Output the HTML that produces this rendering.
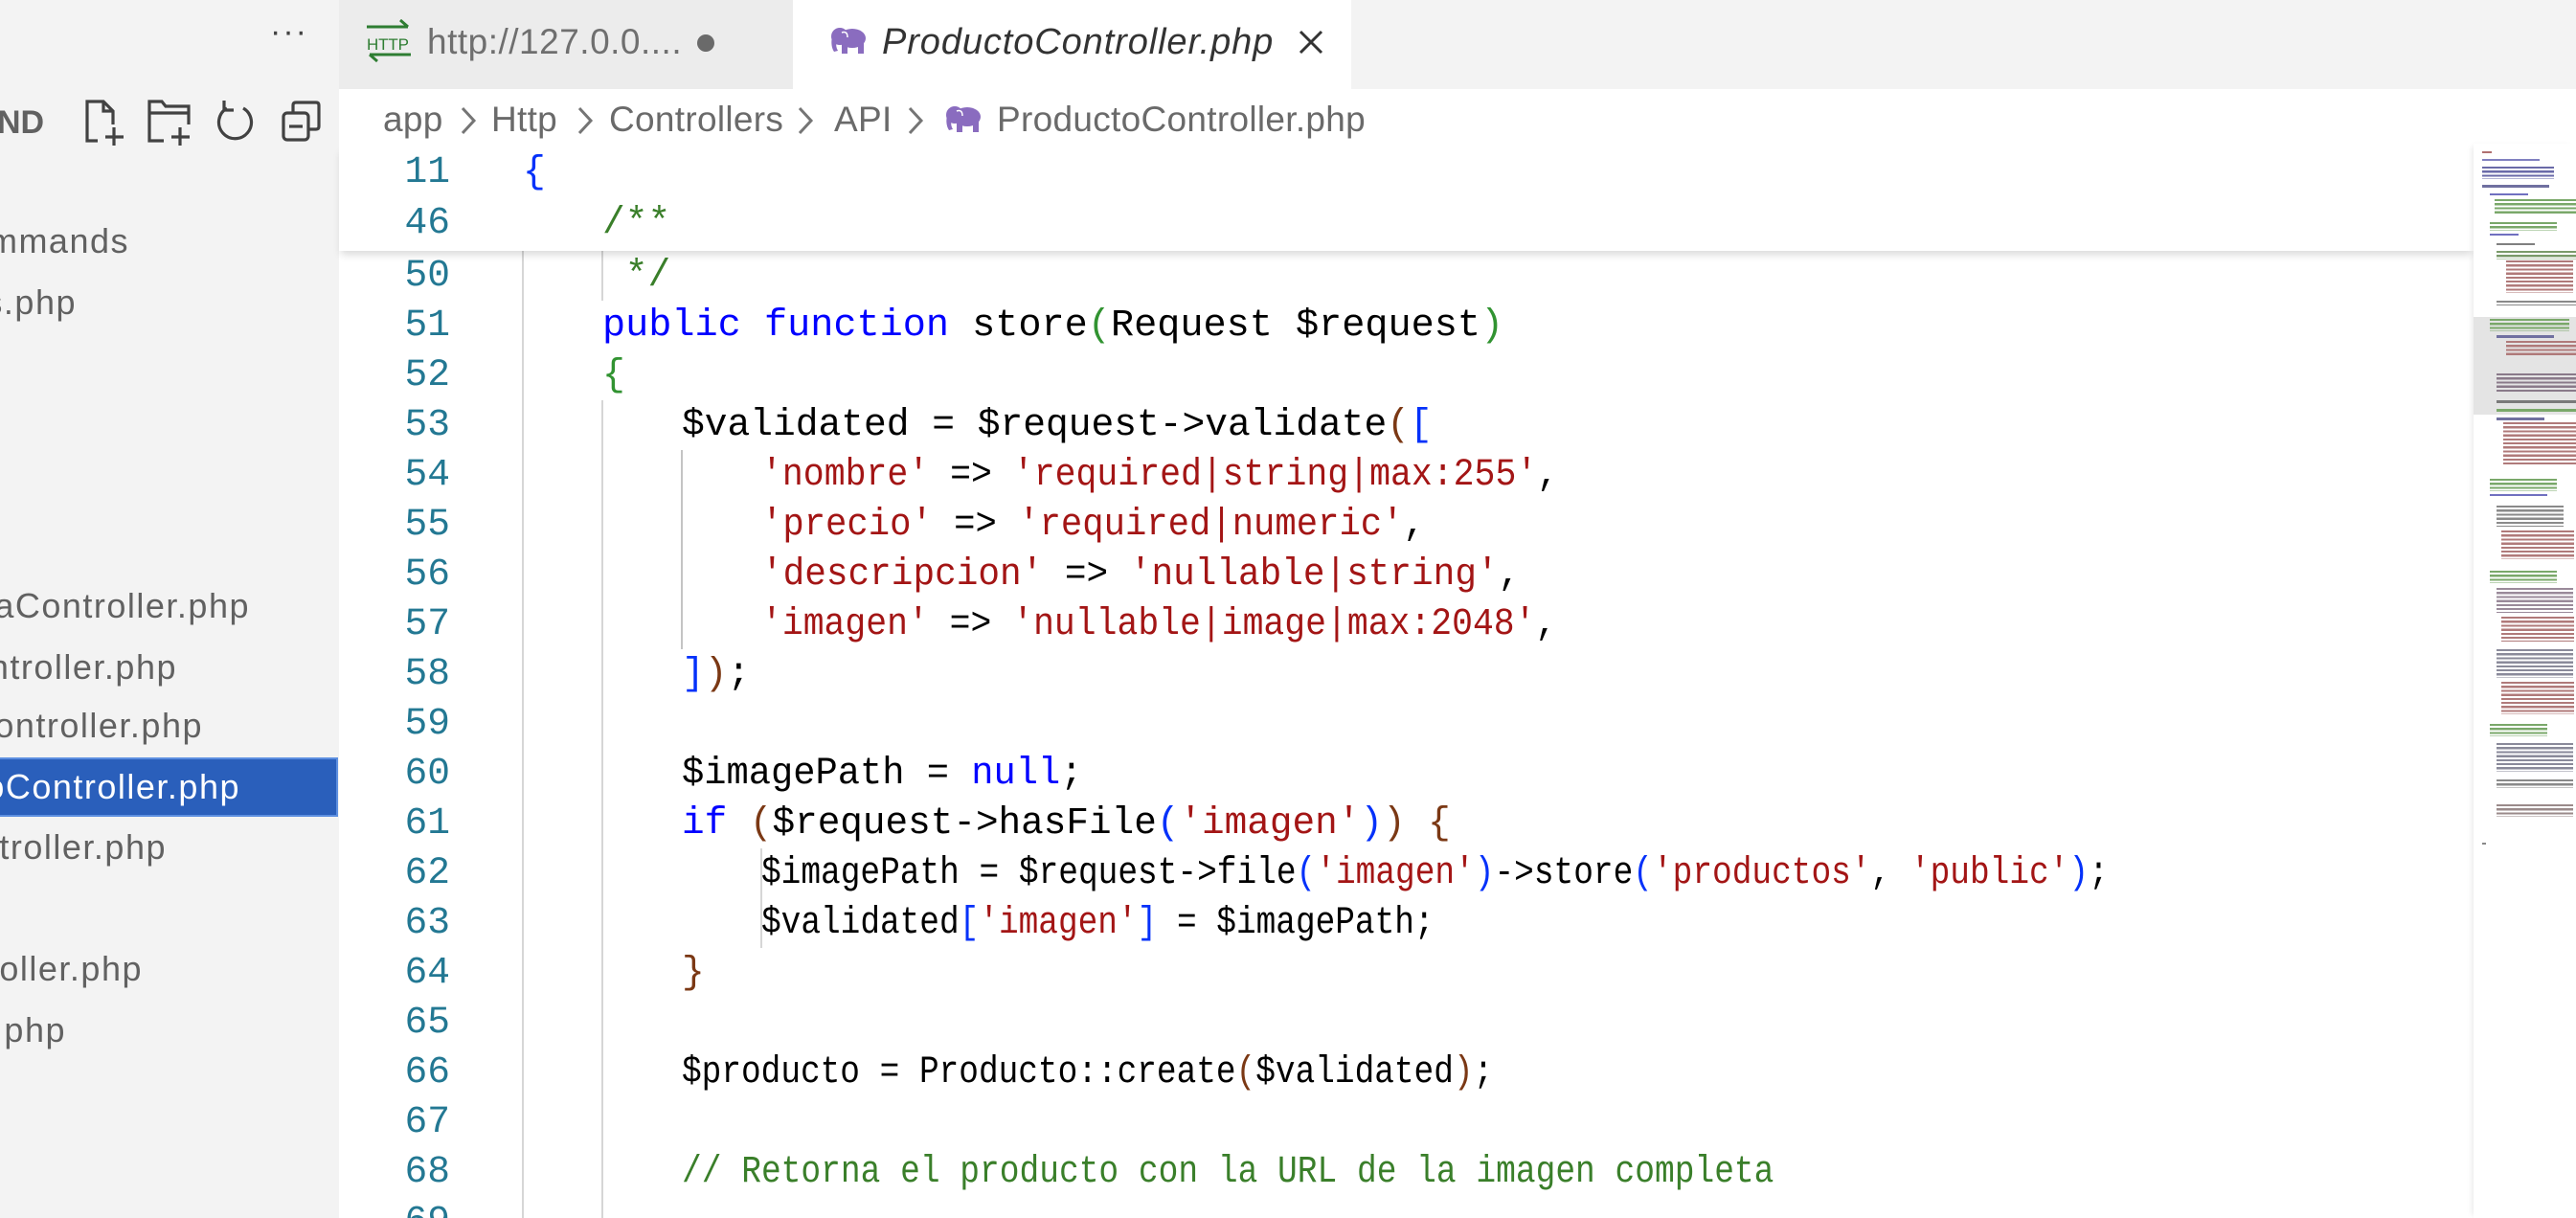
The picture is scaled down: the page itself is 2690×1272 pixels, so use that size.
<!DOCTYPE html>
<html><head><meta charset="utf-8">
<style>
*{margin:0;padding:0;box-sizing:border-box}
html,body{width:2690px;height:1272px;overflow:hidden;background:#fff}
body{position:relative;font-family:"Liberation Sans",sans-serif}
.abs{position:absolute}
#side{left:0;top:0;width:354px;height:1272px;background:#f3f3f3}
.si{position:absolute;left:0;height:63px;line-height:63px;font-size:36px;letter-spacing:1.5px;color:#616161;white-space:nowrap;overflow:hidden;text-align:right;direction:rtl}
.si span{direction:ltr;unicode-bidi:bidi-override}
#tabs{left:354px;top:0;width:2336px;height:93px;background:#f3f3f3}
.code{font-family:"Liberation Mono",monospace;font-size:39.6px;white-space:pre;color:#000}
.ln{position:absolute;left:360px;width:110px;text-align:right;height:52px;line-height:52px;color:#237893;font-family:"Liberation Mono",monospace;font-size:39.6px}
.cl{position:absolute;height:52px;line-height:52px;transform-origin:0 50%}
.k{color:#0000ff}.s{color:#a31515}.c{color:#3a7f2a}
.b1{color:#0431fa}.b2{color:#319331}.b3{color:#7b3814}
.g{position:absolute;width:2px;background:#d6d6d6}
.mm{position:absolute}
.bc{position:absolute;top:100px;font-size:37px;line-height:50px;color:#6a6a6a;white-space:nowrap;letter-spacing:0.3px}
</style></head><body>

<div id="side" class="abs">
  <div class="abs" style="left:282px;top:14px;font-size:34px;color:#424242;letter-spacing:2px">···</div>
  <div class="abs" style="left:-3px;top:108px;font-size:34px;font-weight:bold;color:#616161;line-height:40px">ND</div>
  <svg class="abs" style="left:86px;top:102px" width="50" height="50" viewBox="0 0 50 50" fill="none" stroke="#424242" stroke-width="3.2">
    <path d="M16 45H5V4H22L32 14V28"/><path d="M22 4V14H32"/><path d="M33 31V50M24 41H43"/></svg>
  <svg class="abs" style="left:153px;top:102px" width="52" height="50" viewBox="0 0 52 50" fill="none" stroke="#424242" stroke-width="3.2">
    <path d="M18 45H3V4H16L20 9H44V28"/><path d="M3 16H44"/><path d="M35 31V50M26 41H45"/></svg>
  <svg class="abs" style="left:224px;top:102px" width="44" height="50" viewBox="0 0 44 50" fill="none" stroke="#424242" stroke-width="3.2">
    <path d="M13 11A17 17 0 1 0 30 11"/><path d="M10 3V13H20"/></svg>
  <svg class="abs" style="left:294px;top:104px" width="44" height="46" viewBox="0 0 44 46" fill="none" stroke="#424242" stroke-width="3.2">
    <rect x="2" y="14" width="26" height="28" rx="4"/><path d="M12 14V6Q12 3 15 3H36Q39 3 39 6V28Q39 31 36 31H28"/><path d="M8 28H22"/></svg>

  <div class="si" style="top:220px;width:135px"><span>mmands</span></div>
  <div class="si" style="top:284px;width:80px"><span>s.php</span></div>
  <div class="si" style="top:601px;width:261px"><span>aController.php</span></div>
  <div class="si" style="top:665px;width:185px"><span>ntroller.php</span></div>
  <div class="si" style="top:726px;width:212px"><span>ontroller.php</span></div>
  <div class="abs" style="left:0;top:791px;width:353px;height:62px;background:#2a5fbb;border:2px solid #5d8fe0;border-left:none"></div>
  <div class="si" style="top:790px;width:251px;color:#fff"><span>oController.php</span></div>
  <div class="si" style="top:853px;width:174px"><span>troller.php</span></div>
  <div class="si" style="top:980px;width:149px"><span>oller.php</span></div>
  <div class="si" style="top:1044px;width:69px"><span>php</span></div>
</div>

<div id="tabs" class="abs"></div>
<div class="abs" style="left:354px;top:0;width:474px;height:93px;background:#ececec"></div>
<svg class="abs" style="left:380px;top:20px" width="52" height="48" viewBox="0 0 52 48">
  <path d="M3 8H46M38 1L46 8" stroke="#2e7d32" stroke-width="3" fill="none"/>
  <text x="3" y="32" font-family="Liberation Sans Narrow,Liberation Sans,sans-serif" font-size="17" fill="#2e7d32" textLength="44">HTTP</text>
  <path d="M49 37H6M14 44L6 37" stroke="#2e7d32" stroke-width="3" fill="none"/>
</svg>
<div class="abs" style="left:446px;top:20px;font-size:37px;line-height:48px;color:#6f6f6f;letter-spacing:0.5px">http://127.0.0....</div>
<div class="abs" style="left:728px;top:36px;width:18px;height:18px;border-radius:50%;background:#6a6a6a"></div>
<div class="abs" style="left:828px;top:0;width:583px;height:94px;background:#fff"></div>
<svg class="abs" style="left:866px;top:28px" width="40" height="30" viewBox="0 0 40 30" fill="#8a6cbf">
  <ellipse cx="24" cy="12" rx="14" ry="10"/><circle cx="11" cy="10" r="9"/>
  <path d="M3 10Q1 20 5 26L9 25Q6 20 8 14Z"/><rect x="13" y="16" width="6" height="12"/><rect x="30" y="16" width="6" height="12"/>
  <path d="M13 6Q19 4 19 11" stroke="#fff" stroke-width="1.5" fill="none"/>
</svg>
<div class="abs" style="left:921px;top:20px;font-size:38px;line-height:48px;color:#333;font-style:italic;letter-spacing:0.9px">ProductoController.php</div>
<svg class="abs" style="left:1355px;top:30px" width="28" height="28" viewBox="0 0 28 28" stroke="#333" stroke-width="3"><path d="M3 3L25 25M25 3L3 25"/></svg>

<!-- breadcrumb -->
<div class="bc" style="left:400px">app</div>
<div class="bc" style="left:513px">Http</div>
<div class="bc" style="left:636px">Controllers</div>
<div class="bc" style="left:871px">API</div>
<svg class="abs" style="left:0;top:110px" width="1000" height="32" viewBox="0 0 1000 32" fill="none" stroke="#757575" stroke-width="3">
  <path d="M483 3L495 16L483 29"/><path d="M605 3L617 16L605 29"/><path d="M835 3L847 16L835 29"/><path d="M950 3L962 16L950 29"/></svg>
<svg class="abs" style="left:986px;top:110px" width="40" height="30" viewBox="0 0 40 30" fill="#8a6cbf">
  <ellipse cx="24" cy="12" rx="14" ry="10"/><circle cx="11" cy="10" r="9"/>
  <path d="M3 10Q1 20 5 26L9 25Q6 20 8 14Z"/><rect x="13" y="16" width="6" height="12"/><rect x="30" y="16" width="6" height="12"/>
  <path d="M13 6Q19 4 19 11" stroke="#fff" stroke-width="1.5" fill="none"/>
</svg>
<div class="bc" style="left:1041px">ProductoController.php</div>

<!-- indent guides -->
<div class="g" style="left:545px;top:262px;height:1010px"></div>
<div class="g" style="left:628px;top:262px;height:52px"></div>
<div class="g" style="left:628px;top:418px;height:854px"></div>
<div class="g" style="left:711px;top:470px;height:208px;background:#c4c4c4"></div>
<div class="g" style="left:794px;top:886px;height:104px"></div>

<!-- code lines -->
<div class="code">
<div class="ln" style="top:262px">50</div><div class="cl c" style="left:629px;top:262px"> */</div>
<div class="ln" style="top:314px">51</div><div class="cl" style="left:629px;top:314px;transform:scaleX(1.016)"><span class="k">public</span> <span class="k">function</span> store<span class="b2">(</span>Request $request<span class="b2">)</span></div>
<div class="ln" style="top:366px">52</div><div class="cl b2" style="left:629px;top:366px">{</div>
<div class="ln" style="top:418px">53</div><div class="cl" style="left:712px;top:418px">$validated = $request-&gt;validate<span class="b3">(</span><span class="b1">[</span></div>
<div class="ln" style="top:470px">54</div><div class="cl" style="left:795px;top:470px;transform:scaleX(0.922)"><span class="s">'nombre'</span> =&gt; <span class="s">'required|string|max:255'</span>,</div>
<div class="ln" style="top:522px">55</div><div class="cl" style="left:795px;top:522px;transform:scaleX(0.941)"><span class="s">'precio'</span> =&gt; <span class="s">'required|numeric'</span>,</div>
<div class="ln" style="top:574px">56</div><div class="cl" style="left:795px;top:574px;transform:scaleX(0.953)"><span class="s">'descripcion'</span> =&gt; <span class="s">'nullable|string'</span>,</div>
<div class="ln" style="top:626px">57</div><div class="cl" style="left:795px;top:626px;transform:scaleX(0.92)"><span class="s">'imagen'</span> =&gt; <span class="s">'nullable|image|max:2048'</span>,</div>
<div class="ln" style="top:678px">58</div><div class="cl" style="left:712px;top:678px"><span class="b1">]</span><span class="b3">)</span>;</div>
<div class="ln" style="top:730px">59</div>
<div class="ln" style="top:782px">60</div><div class="cl" style="left:712px;top:782px;transform:scaleX(0.979)">$imagePath = <span class="k">null</span>;</div>
<div class="ln" style="top:834px">61</div><div class="cl" style="left:712px;top:834px;transform:scaleX(0.994)"><span class="k">if</span> <span class="b3">(</span>$request-&gt;hasFile<span class="b1">(</span><span class="s">'imagen'</span><span class="b1">)</span><span class="b3">)</span> <span class="b3">{</span></div>
<div class="ln" style="top:886px">62</div><div class="cl" style="left:795px;top:886px;transform:scaleX(0.871)">$imagePath = $request-&gt;file<span class="b1">(</span><span class="s">'imagen'</span><span class="b1">)</span>-&gt;store<span class="b1">(</span><span class="s">'productos'</span>, <span class="s">'public'</span><span class="b1">)</span>;</div>
<div class="ln" style="top:938px">63</div><div class="cl" style="left:795px;top:938px;transform:scaleX(0.87)">$validated<span class="b1">[</span><span class="s">'imagen'</span><span class="b1">]</span> = $imagePath;</div>
<div class="ln" style="top:990px">64</div><div class="cl b3" style="left:712px;top:990px">}</div>
<div class="ln" style="top:1042px">65</div>
<div class="ln" style="top:1094px">66</div><div class="cl" style="left:712px;top:1094px;transform:scaleX(0.87)">$producto = Producto::create<span class="b3">(</span>$validated<span class="b3">)</span>;</div>
<div class="ln" style="top:1146px">67</div>
<div class="ln" style="top:1198px">68</div><div class="cl c" style="left:712px;top:1198px;transform:scaleX(0.873)">// Retorna el producto con la URL de la imagen completa</div>
<div class="ln" style="top:1250px">69</div>
</div>

<!-- sticky scroll -->
<div class="abs" style="left:354px;top:152px;width:2229px;height:110px;background:#fff;box-shadow:0 6px 8px -2px rgba(0,0,0,0.15)"></div>
<div class="code">
<div class="ln" style="top:154px">11</div><div class="cl b1" style="left:546px;top:154px">{</div>
<div class="ln" style="top:207px">46</div><div class="cl c" style="left:629px;top:207px">/**</div>
</div>

<!-- minimap -->
<div class="abs" style="left:2583px;top:150px;width:107px;height:1122px;background:#fff;box-shadow:-4px 0 6px -3px rgba(0,0,0,0.10)"></div>
<div class="abs" style="left:2583px;top:331px;width:107px;height:102px;background:#e4e4e4"></div>
<div class="mm" style="left:2592px;top:158px;width:10px;height:2px;background:#b07070"></div>
<div class="mm" style="left:2592px;top:166px;width:60px;height:2px;background:#8080c0"></div>
<div class="mm" style="left:2592px;top:174px;width:75px;height:13px;background:repeating-linear-gradient(#6a6aa8 0 2.2px,transparent 2.2px 4.2px)"></div>
<div class="mm" style="left:2592px;top:193px;width:70px;height:3px;background:#7070a0"></div>
<div class="mm" style="left:2600px;top:202px;width:40px;height:2px;background:#7070c0"></div>
<div class="mm" style="left:2605px;top:208px;width:85px;height:17px;background:repeating-linear-gradient(#7aa86a 0 2.2px,transparent 2.2px 4.2px)"></div>
<div class="mm" style="left:2600px;top:232px;width:70px;height:9px;background:repeating-linear-gradient(#7aa86a 0 2.2px,transparent 2.2px 4.2px)"></div>
<div class="mm" style="left:2600px;top:244px;width:30px;height:2px;background:#7070c0"></div>
<div class="mm" style="left:2607px;top:254px;width:40px;height:2px;background:#808080"></div>
<div class="mm" style="left:2607px;top:262px;width:83px;height:9px;background:repeating-linear-gradient(#7a9a6a 0 2.2px,transparent 2.2px 4.2px)"></div>
<div class="mm" style="left:2617px;top:272px;width:70px;height:34px;background:repeating-linear-gradient(#b07a7a 0 2.2px,transparent 2.2px 4.2px)"></div>
<div class="mm" style="left:2607px;top:314px;width:83px;height:5px;background:repeating-linear-gradient(#8a8a8a 0 2.2px,transparent 2.2px 4.2px)"></div>
<div class="mm" style="left:2600px;top:333px;width:83px;height:13px;background:repeating-linear-gradient(#7aa86a 0 2.2px,transparent 2.2px 4.2px)"></div>
<div class="mm" style="left:2607px;top:350px;width:60px;height:3px;background:#7070a0"></div>
<div class="mm" style="left:2617px;top:356px;width:73px;height:17px;background:repeating-linear-gradient(#b07a7a 0 2.2px,transparent 2.2px 4.2px)"></div>
<div class="mm" style="left:2607px;top:390px;width:83px;height:21px;background:repeating-linear-gradient(#8a7a8a 0 2.2px,transparent 2.2px 4.2px)"></div>
<div class="mm" style="left:2607px;top:418px;width:83px;height:3px;background:#7a7a7a"></div>
<div class="mm" style="left:2607px;top:427px;width:83px;height:3px;background:#7aa86a"></div>
<div class="mm" style="left:2607px;top:436px;width:50px;height:3px;background:#7070a0"></div>
<div class="mm" style="left:2614px;top:441px;width:76px;height:46px;background:repeating-linear-gradient(#b07a7a 0 2.2px,transparent 2.2px 4.2px)"></div>
<div class="mm" style="left:2600px;top:500px;width:70px;height:13px;background:repeating-linear-gradient(#7aa86a 0 2.2px,transparent 2.2px 4.2px)"></div>
<div class="mm" style="left:2600px;top:516px;width:60px;height:2px;background:#7070c0"></div>
<div class="mm" style="left:2607px;top:528px;width:70px;height:22px;background:repeating-linear-gradient(#8a8a8a 0 2.2px,transparent 2.2px 4.2px)"></div>
<div class="mm" style="left:2612px;top:554px;width:76px;height:30px;background:repeating-linear-gradient(#b07a7a 0 2.2px,transparent 2.2px 4.2px)"></div>
<div class="mm" style="left:2600px;top:596px;width:70px;height:13px;background:repeating-linear-gradient(#7aa86a 0 2.2px,transparent 2.2px 4.2px)"></div>
<div class="mm" style="left:2607px;top:614px;width:80px;height:26px;background:repeating-linear-gradient(#9a8a9a 0 2.2px,transparent 2.2px 4.2px)"></div>
<div class="mm" style="left:2612px;top:644px;width:76px;height:26px;background:repeating-linear-gradient(#b07a7a 0 2.2px,transparent 2.2px 4.2px)"></div>
<div class="mm" style="left:2607px;top:678px;width:80px;height:30px;background:repeating-linear-gradient(#8a8a9a 0 2.2px,transparent 2.2px 4.2px)"></div>
<div class="mm" style="left:2612px;top:712px;width:76px;height:34px;background:repeating-linear-gradient(#b07a7a 0 2.2px,transparent 2.2px 4.2px)"></div>
<div class="mm" style="left:2600px;top:756px;width:60px;height:13px;background:repeating-linear-gradient(#7aa86a 0 2.2px,transparent 2.2px 4.2px)"></div>
<div class="mm" style="left:2607px;top:776px;width:80px;height:30px;background:repeating-linear-gradient(#8a8a9a 0 2.2px,transparent 2.2px 4.2px)"></div>
<div class="mm" style="left:2607px;top:814px;width:80px;height:9px;background:repeating-linear-gradient(#8a8a8a 0 2.2px,transparent 2.2px 4.2px)"></div>
<div class="mm" style="left:2607px;top:840px;width:80px;height:13px;background:repeating-linear-gradient(#9a8a8a 0 2.2px,transparent 2.2px 4.2px)"></div>
<div class="mm" style="left:2592px;top:880px;width:4px;height:2px;background:#888"></div>
</body></html>
